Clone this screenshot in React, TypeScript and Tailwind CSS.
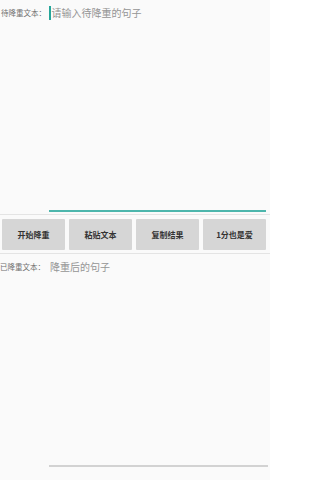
export default function App() {
  const buttons = ["开始降重", "粘贴文本", "复制结果", "1分也是爱"];

  return (
    <div
      className="w-[270px] h-[480px] bg-[#fafafa] flex flex-col overflow-hidden"
      style={{ fontFamily: '"Noto Sans CJK SC", "Noto Sans", sans-serif' }}
    >
      {/* source text */}
      <div className="flex h-[212px]">
        <div className="w-[49px] shrink-0 pt-[8px] pl-[1px] text-[7.5px] leading-[10px] text-[#6f6f6f] whitespace-nowrap">
          待降重文本：
        </div>
        <div className="flex-1 mr-[4px] border-b-2 border-[#4db6ac] pt-[6px]">
          <div className="flex items-center h-[14px] text-[10px] leading-[14px] text-[#959595]">
            <span className="w-[1.5px] h-[14px] bg-[#26a69a] mr-[1px]" />
            <span>请输入待降重的句子</span>
          </div>
        </div>
      </div>

      <div className="h-px bg-[#e4e4e4] mt-[2px]" />

      {/* actions */}
      <div className="flex gap-[4px] pl-[2px] pt-[4px] pb-[3px]">
        {buttons.map((label) => (
          <button
            key={label}
            className="w-[63px] h-[31px] bg-[#d6d6d6] text-[8px] font-bold text-[#333333] rounded-[1px]"
          >
            {label}
          </button>
        ))}
      </div>

      <div className="h-px bg-[#e4e4e4]" />

      {/* result text */}
      <div className="flex h-[213px]">
        <div className="w-[49px] shrink-0 pt-[8px] text-[7.5px] leading-[10px] text-[#6f6f6f] whitespace-nowrap">
          已降重文本：
        </div>
        <div className="flex-1 mr-[2px] border-b-2 border-[#d2d2d2] pt-[6px]">
          <div className="h-[14px] text-[10px] leading-[14px] text-[#959595] pl-[1px]">降重后的句子</div>
        </div>
      </div>
    </div>
  );
}
